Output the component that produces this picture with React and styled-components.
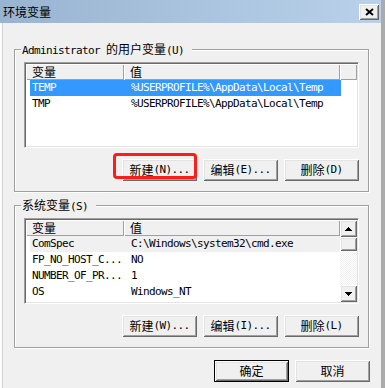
import React from 'react';
import styled, { createGlobalStyle, css } from 'styled-components';

const GlobalStyle = createGlobalStyle`
  html, body {
    margin: 0;
    background: #f0f0f0;
  }
`;

// classic 3D edges
const raised = css`
  background: #f0f0f0;
  box-shadow: inset 1px 1px #fff, inset -1px -1px #696969,
    inset 2px 2px #e3e3e3, inset -2px -2px #a0a0a0;
`;

const Window = styled.div`
  width: 385px;
  height: 388px;
  box-sizing: border-box;
  display: flex;
  flex-direction: column;
  background: #f0f0f0;
  border-right: 4px solid #ababab;
  overflow: hidden;
  color: #000;
  font-family: "DejaVu Sans Mono", "Noto Sans CJK SC", monospace;
  font-size: 11px;
  letter-spacing: -0.62px;
`;

const TitleBar = styled.div`
  height: 23px;
  flex: none;
  display: flex;
  align-items: center;
  justify-content: space-between;
  padding: 0 2px 0 3px;
  background: linear-gradient(to right, #99b4d1, #b9d1ea);
`;

const Title = styled.span`
  font-family: "Noto Sans CJK SC", sans-serif;
  font-size: 12px;
  letter-spacing: 0;
  line-height: 14px;
`;

const CloseButton = styled.div`
  ${raised};
  width: 20px;
  height: 16px;
  display: flex;
  align-items: center;
  justify-content: center;
  padding-top: 1px;
  box-sizing: border-box;
`;

const Body = styled.div`
  flex: 1;
  display: flex;
  flex-direction: column;
  border-left: 2px solid #fcfcfc;
  box-shadow: inset 1px 0 0 #d0d0d0;
`;

const Group = styled.fieldset`
  margin: ${(p) => p.$top}px 12px 0;
  padding: 0 9px 10px;
  min-width: 0;
  border: 1px solid #a0a0a0;
  box-shadow: inset 1px 1px #fff, 1px 1px #fff;
`;

const Legend = styled.legend`
  margin-left: -3px;
  padding: 0 8px 0 1px;
  line-height: 14px;
  height: 14px;
  background: #f0f0f0;
`;

const GroupBody = styled.div`
  display: flex;
  flex-direction: column;
  gap: 11px;
  padding-top: 6px;
`;

const List = styled.div`
  height: 86px;
  box-sizing: border-box;
  display: flex;
  padding: 1px;
  background: #fff;
  border: 1px solid;
  border-color: #a0a0a0 #fff #fff #a0a0a0;
  box-shadow: inset 1px 1px #696969, inset -1px -1px #e3e3e3;
`;

const ListMain = styled.div`
  flex: 1;
  min-width: 0;
  display: flex;
  flex-direction: column;
`;

const Header = styled.div`
  display: flex;
  height: 16px;
  flex: none;
`;

const HeaderCell = styled.div`
  width: ${(p) => (p.$w ? `${p.$w}px` : 'auto')};
  flex: ${(p) => (p.$w ? 'none' : 1)};
  box-sizing: border-box;
  padding-left: 6px;
  line-height: 16px;
  background: #f0f0f0;
  box-shadow: inset 1px 1px #fff, inset -1px -1px #a0a0a0;
`;

const Rows = styled.div`
  padding-left: 4px;
`;

const Row = styled.div`
  display: grid;
  grid-template-columns: 99px 1fr;
  width: 311px;
  height: 16px;
  line-height: 16px;
  padding-left: 2px;
  box-sizing: border-box;
  white-space: nowrap;
  color: ${(p) => (p.$tone === 'active' ? '#fff' : '#000')};
  background: ${(p) =>
    p.$tone === 'active' ? '#3399ff' : p.$tone === 'muted' ? '#f0f0f0' : 'transparent'};
`;

const ScrollBar = styled.div`
  width: 17px;
  flex: none;
  display: flex;
  flex-direction: column;
`;

const ScrollButton = styled.div`
  ${raised};
  height: 17px;
  display: flex;
  align-items: center;
  justify-content: center;
`;

const Thumb = styled.div`
  ${raised};
  height: 14px;
`;

const Track = styled.div`
  flex: 1;
  background-color: #fff;
  background-image: repeating-conic-gradient(#f0f0f0 0 25%, #fff 0 50%);
  background-size: 2px 2px;
`;

const ButtonRow = styled.div`
  display: flex;
  justify-content: flex-end;
  gap: 6px;
  padding: ${(p) => p.$pad || 0};
`;

const Slot = styled.div`
  position: relative;
`;

const PushButton = styled.button`
  ${raised};
  width: 75px;
  height: 22px;
  box-sizing: border-box;
  padding: 0;
  border: ${(p) => (p.$default ? '1px solid #000' : '0')};
  display: flex;
  align-items: center;
  justify-content: center;
  font: inherit;
  letter-spacing: inherit;
  color: #000;
  line-height: 14px;
`;

const Marker = styled.div`
  position: absolute;
  left: -9px;
  top: -6px;
  width: 84px;
  height: 26px;
  box-sizing: border-box;
  border: 3px solid #fb1c1c;
  border-radius: 4px;
  pointer-events: none;
`;

const Zh = styled.span`
  font-family: "Noto Sans CJK SC", sans-serif;
  font-size: 12px;
  letter-spacing: 0;
`;

function Txt({ children }) {
  return String(children)
    .split(/([\u4e00-\u9fff]+)/)
    .map((part, i) =>
      /[\u4e00-\u9fff]/.test(part) ? <Zh key={i}>{part}</Zh> : part
    );
}

const CloseIcon = () => (
  <svg width="9" height="8" viewBox="0 0 9 8">
    <path d="M1 1L8 7M8 1L1 7" stroke="#000" strokeWidth="1.9" />
  </svg>
);

const Arrow = ({ down }) => (
  <svg width="7" height="4" viewBox="0 0 7 4" shapeRendering="crispEdges">
    <path
      d={
        down
          ? 'M0 0h7v1h-7z M1 1h5v1h-5z M2 2h3v1h-3z M3 3h1v1h-1z'
          : 'M3 0h1v1h-1z M2 1h3v1h-3z M1 2h5v1h-5z M0 3h7v1h-7z'
      }
      fill="#000"
    />
  </svg>
);

function ListView({ rows, scroll }) {
  return (
    <List>
      <ListMain>
        <Header>
          <HeaderCell $w={98}><Txt>变量</Txt></HeaderCell>
          <HeaderCell $w={216}><Txt>值</Txt></HeaderCell>
          <HeaderCell />
        </Header>
        <Rows>
          {rows.map(([name, value, tone]) => (
            <Row key={name} $tone={tone}>
              <span>{name}</span>
              <span>{value}</span>
            </Row>
          ))}
        </Rows>
      </ListMain>
      {scroll && (
        <ScrollBar>
          <ScrollButton><Arrow /></ScrollButton>
          <Thumb />
          <Track />
          <ScrollButton><Arrow down /></ScrollButton>
        </ScrollBar>
      )}
    </List>
  );
}

const userVars = [
  ['TEMP', '%USERPROFILE%\\AppData\\Local\\Temp', 'active'],
  ['TMP', '%USERPROFILE%\\AppData\\Local\\Temp'],
];

const systemVars = [
  ['ComSpec', 'C:\\Windows\\system32\\cmd.exe', 'muted'],
  ['FP_NO_HOST_C...', 'NO'],
  ['NUMBER_OF_PR...', '1'],
  ['OS', 'Windows_NT'],
];

export default function App() {
  return (
    <>
      <GlobalStyle />
      <Window>
        <TitleBar>
          <Title>环境变量</Title>
          <CloseButton><CloseIcon /></CloseButton>
        </TitleBar>
        <Body>
          <Group $top={19}>
            <Legend><Txt>Administrator 的用户变量(U)</Txt></Legend>
            <GroupBody>
              <ListView rows={userVars} />
              <ButtonRow>
                <Slot>
                  <PushButton><Txt>新建(N)...</Txt></PushButton>
                  <Marker />
                </Slot>
                <PushButton><Txt>编辑(E)...</Txt></PushButton>
                <PushButton><Txt>删除(D)</Txt></PushButton>
              </ButtonRow>
            </GroupBody>
          </Group>
          <Group $top={6}>
            <Legend><Txt>系统变量(S)</Txt></Legend>
            <GroupBody>
              <ListView rows={systemVars} scroll />
              <ButtonRow>
                <PushButton><Txt>新建(W)...</Txt></PushButton>
                <PushButton><Txt>编辑(I)...</Txt></PushButton>
                <PushButton><Txt>删除(L)</Txt></PushButton>
              </ButtonRow>
            </GroupBody>
          </Group>
          <ButtonRow $pad="12px 11px 0 0">
            <PushButton $default><Txt>确定</Txt></PushButton>
            <PushButton><Txt>取消</Txt></PushButton>
          </ButtonRow>
        </Body>
      </Window>
    </>
  );
}
